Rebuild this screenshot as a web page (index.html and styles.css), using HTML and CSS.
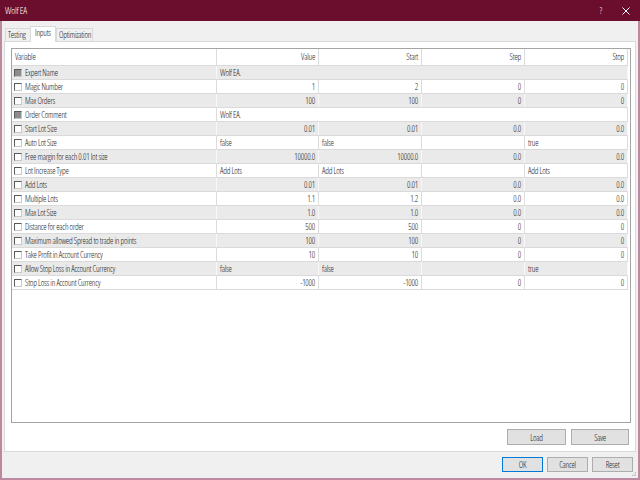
FILE: index.html
```html
<!DOCTYPE html>
<html>
<head>
<meta charset="utf-8">
<title>Wolf EA</title>
<link rel="stylesheet" href="styles.css">
</head>
<body>
<div class="win">
  <div class="titlebar">
    <span class="title">Wolf EA</span>
    <span class="help">?</span>
    <svg class="close" width="8" height="8" viewBox="0 0 8 8"><path d="M0.5 0.5 L7.5 7.5 M7.5 0.5 L0.5 7.5" stroke="#fff" stroke-width="1"/></svg>
  </div>
  <div class="body">
    <div class="tabs">
      <div class="tab t1">Testing</div>
      <div class="tab sel">Inputs</div>
      <div class="tab t3">Optimization</div>
    </div>
    <div class="panel">
      <div class="gridbox">
        <div class="row head">
          <div class="c">Variable</div><div class="c num">Value</div><div class="c num">Start</div><div class="c num">Step</div><div class="c num">Stop</div>
        </div>
        <div class="row g">
          <div class="c var"><span class="cb dis"></span>Expert Name</div><div class="c span">Wolf EA.</div>
        </div>
        <div class="row">
          <div class="c var"><span class="cb"></span>Magic Number</div><div class="c num">1</div><div class="c num">2</div><div class="c num">0</div><div class="c num">0</div>
        </div>
        <div class="row g">
          <div class="c var"><span class="cb"></span>Max Orders</div><div class="c num">100</div><div class="c num">100</div><div class="c num">0</div><div class="c num">0</div>
        </div>
        <div class="row">
          <div class="c var"><span class="cb dis"></span>Order Comment</div><div class="c span">Wolf EA.</div>
        </div>
        <div class="row g">
          <div class="c var"><span class="cb"></span>Start Lot Size</div><div class="c num">0.01</div><div class="c num">0.01</div><div class="c num">0.0</div><div class="c num">0.0</div>
        </div>
        <div class="row">
          <div class="c var"><span class="cb"></span>Auto Lot Size</div><div class="c">false</div><div class="c">false</div><div class="c"></div><div class="c">true</div>
        </div>
        <div class="row g">
          <div class="c var"><span class="cb"></span>Free margin for each 0.01 lot size</div><div class="c num">10000.0</div><div class="c num">10000.0</div><div class="c num">0.0</div><div class="c num">0.0</div>
        </div>
        <div class="row">
          <div class="c var"><span class="cb"></span>Lot Increase Type</div><div class="c">Add Lots</div><div class="c">Add Lots</div><div class="c"></div><div class="c">Add Lots</div>
        </div>
        <div class="row g">
          <div class="c var"><span class="cb"></span>Add Lots</div><div class="c num">0.01</div><div class="c num">0.01</div><div class="c num">0.0</div><div class="c num">0.0</div>
        </div>
        <div class="row">
          <div class="c var"><span class="cb"></span>Multiple Lots</div><div class="c num">1.1</div><div class="c num">1.2</div><div class="c num">0.0</div><div class="c num">0.0</div>
        </div>
        <div class="row g">
          <div class="c var"><span class="cb"></span>Max Lot Size</div><div class="c num">1.0</div><div class="c num">1.0</div><div class="c num">0.0</div><div class="c num">0.0</div>
        </div>
        <div class="row">
          <div class="c var"><span class="cb"></span>Distance for each order</div><div class="c num">500</div><div class="c num">500</div><div class="c num">0</div><div class="c num">0</div>
        </div>
        <div class="row g">
          <div class="c var"><span class="cb"></span>Maximum allowed Spread to trade in points</div><div class="c num">100</div><div class="c num">100</div><div class="c num">0</div><div class="c num">0</div>
        </div>
        <div class="row">
          <div class="c var"><span class="cb"></span>Take Profit in Account Currency</div><div class="c num">10</div><div class="c num">10</div><div class="c num">0</div><div class="c num">0</div>
        </div>
        <div class="row g">
          <div class="c var"><span class="cb"></span>Allow Stop Loss in Account Currency</div><div class="c">false</div><div class="c">false</div><div class="c"></div><div class="c">true</div>
        </div>
        <div class="row">
          <div class="c var"><span class="cb"></span>Stop Loss in Account Currency</div><div class="c num">-1000</div><div class="c num">-1000</div><div class="c num">0</div><div class="c num">0</div>
        </div>
      </div>
      <div class="btnrow">
        <button class="btn load">Load</button>
        <button class="btn save">Save</button>
      </div>
    </div>
    <div class="dlg">
      <button class="btn dbtn ok">OK</button>
      <button class="btn dbtn">Cancel</button>
      <button class="btn dbtn">Reset</button>
    </div>
    <svg class="grip" width="5" height="5" viewBox="0 0 5 5"><rect x="3" y="0" width="1" height="1" fill="#b8b8b8"/><rect x="1.5" y="1.5" width="1" height="1" fill="#b8b8b8"/><rect x="3" y="1.5" width="1" height="1" fill="#b8b8b8"/><rect x="0" y="3" width="1" height="1" fill="#b8b8b8"/><rect x="1.5" y="3" width="1" height="1" fill="#b8b8b8"/><rect x="3" y="3" width="1" height="1" fill="#b8b8b8"/></svg>
  </div>
</div>
</body>
</html>
```
FILE: styles.css
```css
* { box-sizing: border-box; }
html, body { margin: 0; padding: 0; }
body {
  width: 640px;
  height: 480px;
  overflow: hidden;
  background: #f0f0f0;
  font-family: "Open Sans", "Liberation Sans", Arial, sans-serif;
  font-stretch: 75%;
  font-size: 8.5px;
  font-weight: 350;
  letter-spacing: -0.25px;
  color: #1a1a1a;
}
.win { width: 640px; height: 480px; display: flex; flex-direction: column; }
.titlebar {
  height: 21px;
  flex: none;
  background: #6b0e2e;
  color: #fff;
  display: flex;
  align-items: center;
  padding: 0 10px 0 5px;
  font-size: 9.5px;
}
.title { flex: 1; }
.help { font-size: 8.5px; margin-right: 20px; }
.close { display: block; }
.body {
  flex: 1;
  position: relative;
  background: #f0f0f0;
  border: 2px solid #bb8aa0;
  border-top: 0;
  display: flex;
  flex-direction: column;
}
.tabs {
  height: 20px;
  flex: none;
  display: flex;
  align-items: flex-end;
  padding-left: 3px;
}
.tab {
  height: 13px;
  border: 1px solid #d9d9d9;
  border-bottom: 0;
  background: #f0f0f0;
  line-height: 12px;
  padding-left: 2px;
  white-space: nowrap;
}
.t1 { width: 26px; }
.t3 { width: 37px; }
.tab.sel {
  position: relative;
  z-index: 1;
  width: 26px;
  height: 16px;
  margin-left: -1px;
  margin-bottom: -1px;
  background: #fff;
  padding-left: 4px;
  line-height: 12px;
}
.panel {
  flex: none;
  height: 411px;
  margin: 0 2px;
  background: #fff;
  border: 1px solid #d9d9d9;
  padding: 6px 4px 6px 6px;
  display: flex;
  flex-direction: column;
}
.gridbox {
  height: 375px;
  flex: none;
  border: 1px solid #a4a4a4;
  background: #fff;
  overflow: hidden;
}
.row {
  width: 616px;
  height: 14px;
  display: grid;
  grid-template-columns: 205px 102px 103px 103px 103px;
  border-bottom: 1px solid #dadada;
}
.row.head { height: 17px; }
.row.g { background: #eaeaea; }
.c {
  border-right: 1px solid #dcdcdc;
  padding: 0 3px;
  line-height: 13px;
  white-space: nowrap;
  overflow: hidden;
}
.row.head .c { line-height: 16px; }
.row.g .c { border-right-color: #f8f8f8; }
.num { text-align: right; }
.span { grid-column: 2 / 6; }
.var { display: flex; align-items: center; padding-left: 2px; }
.cb {
  flex: none;
  width: 8px;
  height: 8px;
  margin-right: 3px;
  background: #fff;
  border: 1px solid;
  border-color: #5a5a5a #c8c8c8 #c8c8c8 #5a5a5a;
}
.cb.dis { background: #8c8c8c; }
.btnrow {
  display: flex;
  justify-content: flex-end;
  gap: 5px;
  margin-top: 6px;
  padding-right: 2px;
}
.btn {
  height: 16px;
  padding: 0;
  background: #e1e1e1;
  border: 1px solid #adadad;
  font: inherit;
  letter-spacing: inherit;
  color: #1a1a1a;
}
.load { width: 59px; }
.save { width: 58px; }
.dlg {
  display: flex;
  justify-content: flex-end;
  gap: 4px;
  padding: 5px 5px 0 0;
}
.dbtn { width: 41px; height: 15px; }
.ok { border-color: #0078d7; }
.grip { position: absolute; right: 1px; bottom: 1px; }
```
